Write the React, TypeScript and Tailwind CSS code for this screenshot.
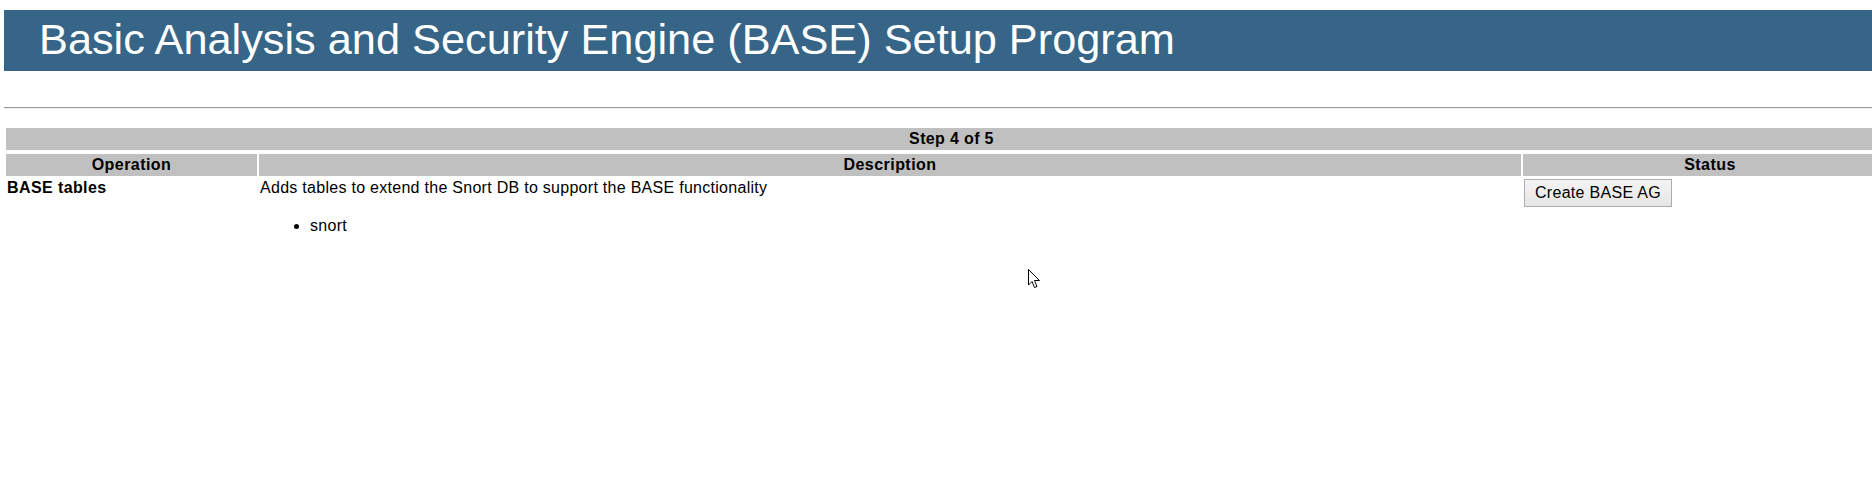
import React from "react";

export default function App() {
  return (
    <div className="relative w-[1872px] h-[479px] overflow-hidden bg-white text-black font-['Liberation_Sans',Arial,sans-serif]">
      <div className="pt-[10px] pl-[4px]">
        <div className="h-[61px] bg-[#366588] text-white text-[43.3px] leading-[43px] pt-[8px] pl-[35px] whitespace-nowrap">
          Basic Analysis and Security Engine (BASE) Setup Program
        </div>
      </div>
      <div className="ml-[4px] mt-[36px] h-[2px] border-t border-b border-t-[#9a9a9a] border-b-[#eeeeee]" />
      <div className="ml-[6px] mt-[19px] w-[1891px] text-[16px] leading-[18px] tracking-[0.28px]">
        <div className="h-[22px] bg-[#c0c0c0] font-bold text-center pt-[2px] tracking-[0.35px]">Step 4 of 5</div>
        <div className="mt-[4px] grid grid-cols-[251px_1262px_374px] gap-x-[2px] font-bold tracking-[0.45px]">
          <div className="h-[22px] bg-[#c0c0c0] text-center pt-[2px]">Operation</div>
          <div className="h-[22px] bg-[#c0c0c0] text-center pt-[2px]">Description</div>
          <div className="h-[22px] bg-[#c0c0c0] text-center pt-[2px]">Status</div>
        </div>
        <div className="mt-[2px] grid grid-cols-[251px_1262px_374px] gap-x-[2px]">
          <div className="p-[1px] font-bold tracking-[0.4px]">BASE tables</div>
          <div className="p-[1px]">
            <div>Adds tables to extend the Snort DB to support the BASE functionality</div>
            <ul className="mt-[20px] pl-[50px] list-disc">
              <li>snort</li>
            </ul>
          </div>
          <div className="p-[1px]">
            <button className="w-[148px] h-[28px] border border-[#adadad] bg-gradient-to-b from-[#f4f4f4] to-[#e6e6e6] text-[16px] leading-[18px] tracking-[0.3px] text-black text-center">
              Create BASE AG
            </button>
          </div>
        </div>
      </div>
      <svg className="absolute left-[1028px] top-[269px]" width="13" height="20" viewBox="0 0 13 20">
        <path d="M0.5 0.5 L0.5 16 L4 12.5 L6.5 18.5 L9 17.5 L6.5 11.5 L11.5 11.5 Z" fill="white" stroke="black" strokeWidth="1" strokeLinejoin="miter" />
      </svg>
    </div>
  );
}
